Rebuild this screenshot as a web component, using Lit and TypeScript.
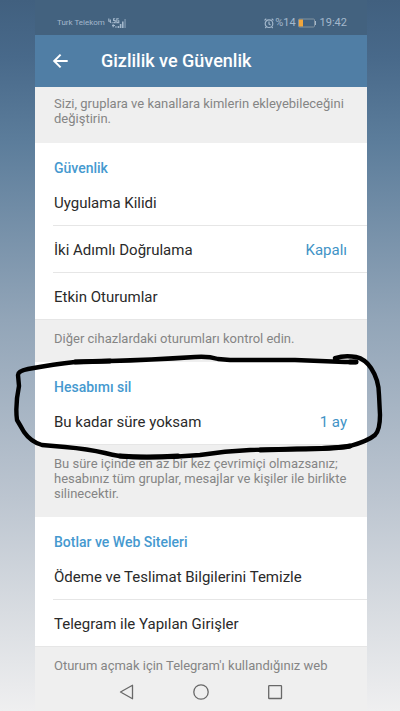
import { LitElement, html, css, svg } from "lit";
import { customElement } from "lit/decorators.js";

interface Row {
  label: string;
  value?: string;
}

@customElement("settings-section")
class SettingsSection extends LitElement {
  static properties = {
    heading: { type: String },
    rows: { attribute: false },
  };
  declare heading: string;
  declare rows: Row[];

  static styles = css`
    :host {
      display: block;
      position: relative;
      background: #fff;
    }
    h2 {
      margin: 0;
      padding: 15px 19px 1px;
      font-size: 14px;
      line-height: 20px;
      font-weight: 500;
      color: #4599cf;
    }
    ul {
      margin: 0;
      padding: 0;
      list-style: none;
    }
    li {
      margin-left: 18px;
      border-bottom: 1px solid #e6e6e6;
    }
    li:last-child {
      margin-left: 0;
      padding-left: 18px;
    }
    button {
      display: flex;
      justify-content: space-between;
      align-items: center;
      width: 100%;
      height: 46px;
      margin: 0;
      padding: 2px 20px 0 1px;
      border: 0;
      background: none;
      font: inherit;
      font-size: 15px;
      color: #2a2a2a;
      text-align: left;
    }
    .value {
      color: #4193c6;
    }
  `;

  render() {
    return html`
      <h2>${this.heading}</h2>
      <ul>
        ${this.rows.map(
          (r) => html`<li>
            <button type="button">
              <span>${r.label}</span>
              ${r.value ? html`<span class="value">${r.value}</span>` : ""}
            </button>
          </li>`
        )}
      </ul>
      <slot></slot>
    `;
  }
}

const signal = svg`
  <path d="M0.8 0.5V3.2H3M2.4 1.5V5M4.2 4.2v1M7.2 0.8H5.6V2.5H7.2V4.6H5.4M10.8 0.8H8.8V4.6H10.8V2.8H9.8" fill="none" stroke="currentColor" stroke-width="1.1"/>
  <path d="M4 7.5h3M5.2 6.3v3M7 9h1.8" stroke="currentColor" stroke-width="1.2"/>
  <path d="M9.6 8h1.6v2H9.6zM11.8 6h1.6v4h-1.6zM14 3.5h1.6V10H14z" fill="currentColor"/>
  <path d="M16.2 1h1.8v9h-1.8z" fill="currentColor" opacity="0.45"/>`;

@customElement("app-root")
class AppRoot extends LitElement {
  static styles = css`
    :host {
      display: block;
      font-family: Roboto, "Noto Sans", sans-serif;
    }
    .page {
      box-sizing: border-box;
      min-height: 100vh;
      padding: 0 33px 0 35px;
      background: linear-gradient(#41607f 0%, #48698a 8%, #5c7d9b 20%, #92a5b8 45%, #bcc5d0 70%, #d8dce1 86%, #efeff0 100%);
      display: flex;
    }
    .phone {
      flex: 1;
      min-width: 0;
      display: flex;
      flex-direction: column;
      background: #efefef;
    }
    .status {
      box-sizing: border-box;
      height: 35px;
      padding: 11px 20px 0 22px;
      display: flex;
      justify-content: space-between;
      align-items: flex-start;
      background: #43627f;
      color: #a4b8cc;
      font-size: 11px;
      line-height: 24px;
    }
    .group {
      display: flex;
      align-items: center;
      height: 24px;
    }
    .carrier {
      font-size: 8px;
      margin-right: 3px;
    }
    .battery {
      margin: 0 3px 0 2px;
    }
    header {
      display: flex;
      align-items: center;
      gap: 32px;
      height: 52px;
      padding: 0 17px;
      background: #507ea5;
      color: #fff;
    }
    h1 {
      margin: 0;
      font-size: 18px;
      line-height: 24px;
      font-weight: 500;
    }
    header button,
    nav button {
      display: flex;
      margin: 0;
      padding: 0;
      border: 0;
      background: none;
      color: inherit;
    }
    .hint {
      margin: 0;
      padding: 11px 19px 16px;
      font-size: 13px;
      line-height: 15px;
      color: #858585;
    }
    .hint.first {
      padding-top: 9px;
      padding-bottom: 17px;
    }
    .hint.last {
      padding-bottom: 0;
    }
    nav {
      flex: 1;
      min-height: 37px;
      display: flex;
      justify-content: center;
      align-items: center;
      gap: 58px;
      color: #686868;
    }
    .mark {
      position: absolute;
      z-index: 1;
      left: -25px;
      top: -11px;
      width: calc(100% + 45px);
      height: 110px;
      overflow: visible;
      pointer-events: none;
    }
  `;

  render() {
    return html`
      <div class="page">
        <div class="phone">
          <div class="status">
            <div class="group">
              <span class="carrier">Turk Telekom</span>
              <svg width="19" height="11" viewBox="0 0 19 11" aria-hidden="true">${signal}</svg>
            </div>
            <div class="group">
              <svg width="11" height="11" viewBox="0 0 11 11" fill="none" stroke="currentColor" stroke-width="1.2" aria-hidden="true">
                <circle cx="5" cy="5.7" r="3.8" />
                <path d="M5 3.5v2.4l1.5 1M0.5 2.4L2.3 0.8M9.5 2.4L7.7 0.8M2.3 8.8l-1 1.2M7.7 8.8l1 1.2" />
              </svg>
              <span>%14</span>
              <svg class="battery" width="19" height="10" viewBox="0 0 19 10" aria-hidden="true">
                <rect x="0.5" y="1" width="16" height="8" rx="1" fill="none" stroke="#8293a1" />
                <rect x="1" y="1.5" width="4" height="7" fill="#f0a63c" />
                <path d="M17.5 3v4" stroke="#a4b8cc" />
              </svg>
              <span>19:42</span>
            </div>
          </div>
          <header>
            <button type="button" aria-label="Geri">
              <svg width="17" height="16" viewBox="0 0 17 16" fill="none" stroke="currentColor" stroke-width="2">
                <path d="M15.7 8H2.5M8.6 1.6L2.2 8l6.4 6.4" />
              </svg>
            </button>
            <h1>Gizlilik ve Güvenlik</h1>
          </header>
          <p class="hint first">Sizi, gruplara ve kanallara kimlerin ekleyebileceğini değiştirin.</p>
          <settings-section
            heading="Güvenlik"
            .rows=${[
              { label: "Uygulama Kilidi" },
              { label: "İki Adımlı Doğrulama", value: "Kapalı" },
              { label: "Etkin Oturumlar" },
            ]}
          ></settings-section>
          <p class="hint">Diğer cihazlardaki oturumları kontrol edin.</p>
          <settings-section heading="Hesabımı sil" .rows=${[{ label: "Bu kadar süre yoksam", value: "1 ay" }]}>
            <svg class="mark" viewBox="10 351 377 110" preserveAspectRatio="none" fill="none" stroke="#000" stroke-linecap="round" stroke-linejoin="round" aria-hidden="true">
              <path stroke-width="4.4" d="M335 358Q345 355 356 357Q365 359 371 368Q379 380 379 395L380 415Q380 430 375 435Q368 441 350 446Q342 448 297 449L250 450Q225 451 200 455Q165 458 133 457Q120 457 105 453Q88 449 65 447L42 445Q31 442 24 432Q20 425 17 420Q15 405 19 386L18 375Q18 371 28 369Q55 364 75 362L110 361Q150 360 195 357Q208 356 218 359L230 360L295 360L345 362L356 362" />
              <path stroke-width="5" d="M75 362L110 361M120 456Q145 458 178 456M260 450L297 449Q335 449 350 446M350 362L356 362" />
            </svg>
          </settings-section>
          <p class="hint">
            Bu süre içinde en az bir kez çevrimiçi olmazsanız; hesabınız tüm gruplar, mesajlar ve kişiler ile birlikte silinecektir.
          </p>
          <settings-section
            heading="Botlar ve Web Siteleri"
            .rows=${[{ label: "Ödeme ve Teslimat Bilgilerini Temizle" }, { label: "Telegram ile Yapılan Girişler" }]}
          ></settings-section>
          <p class="hint last">Oturum açmak için Telegram'ı kullandığınız web</p>
          <nav aria-label="Sistem">
            <button type="button" aria-label="Geri">
              <svg width="16" height="16" viewBox="0 0 16 16" fill="none" stroke="currentColor" stroke-width="1.3" stroke-linejoin="round">
                <path d="M13.5 1.2V14.8L1.5 8Z" />
              </svg>
            </button>
            <button type="button" aria-label="Ana ekran">
              <svg width="16" height="16" viewBox="0 0 16 16" fill="none" stroke="currentColor" stroke-width="1.3">
                <circle cx="8" cy="8" r="7.2" />
              </svg>
            </button>
            <button type="button" aria-label="Son uygulamalar">
              <svg width="16" height="16" viewBox="0 0 16 16" fill="none" stroke="currentColor" stroke-width="1.3">
                <rect x="1.7" y="1.7" width="12.8" height="12.8" rx="0.6" />
              </svg>
            </button>
          </nav>
        </div>
      </div>
    `;
  }
}
